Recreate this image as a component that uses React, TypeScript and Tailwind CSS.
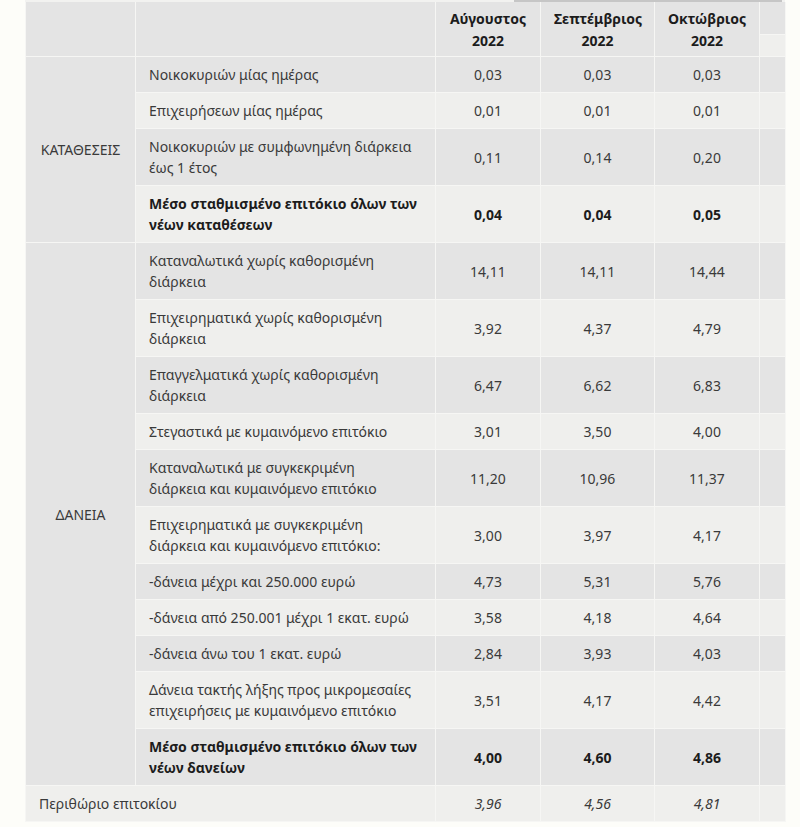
import React from "react";

type Row = {
  label: string;
  values: string[];
  bold?: boolean;
};

const deposits: Row[] = [
  { label: "Νοικοκυριών μίας ημέρας", values: ["0,03", "0,03", "0,03"] },
  { label: "Επιχειρήσεων μίας ημέρας", values: ["0,01", "0,01", "0,01"] },
  {
    label: "Νοικοκυριών με συμφωνημένη διάρκεια\nέως 1 έτος",
    values: ["0,11", "0,14", "0,20"],
  },
  {
    label: "Μέσο σταθμισμένο επιτόκιο όλων των\nνέων καταθέσεων",
    values: ["0,04", "0,04", "0,05"],
    bold: true,
  },
];

const loans: Row[] = [
  { label: "Καταναλωτικά χωρίς καθορισμένη\nδιάρκεια", values: ["14,11", "14,11", "14,44"] },
  { label: "Επιχειρηματικά χωρίς καθορισμένη\nδιάρκεια", values: ["3,92", "4,37", "4,79"] },
  { label: "Επαγγελματικά χωρίς καθορισμένη\nδιάρκεια", values: ["6,47", "6,62", "6,83"] },
  { label: "Στεγαστικά με κυμαινόμενο επιτόκιο", values: ["3,01", "3,50", "4,00"] },
  {
    label: "Καταναλωτικά με συγκεκριμένη\nδιάρκεια και κυμαινόμενο επιτόκιο",
    values: ["11,20", "10,96", "11,37"],
  },
  {
    label: "Επιχειρηματικά με συγκεκριμένη\nδιάρκεια και κυμαινόμενο επιτόκιο:",
    values: ["3,00", "3,97", "4,17"],
  },
  { label: "-δάνεια μέχρι και 250.000 ευρώ", values: ["4,73", "5,31", "5,76"] },
  { label: "-δάνεια από 250.001 μέχρι 1 εκατ. ευρώ", values: ["3,58", "4,18", "4,64"] },
  { label: "-δάνεια άνω του 1 εκατ. ευρώ", values: ["2,84", "3,93", "4,03"] },
  {
    label: "Δάνεια τακτής λήξης προς μικρομεσαίες\nεπιχειρήσεις με κυμαινόμενο επιτόκιο",
    values: ["3,51", "4,17", "4,42"],
  },
  {
    label: "Μέσο σταθμισμένο επιτόκιο όλων των\nνέων δανείων",
    values: ["4,00", "4,60", "4,86"],
    bold: true,
  },
];

const cell = "border border-[#f6f6f4] px-[13px] py-[7px] align-middle";

function BodyRows({ group, rows }: { group: string; rows: Row[] }) {
  return (
    <>
      {rows.map((row, i) => {
        const bg = i % 2 === 0 ? "bg-[#e4e4e4]" : "bg-[#efefed]";
        const weight = row.bold ? "font-bold text-[#1c1c1c]" : "text-[#3a3a3a]";
        return (
          <tr key={row.label} className={bg}>
            {i === 0 && (
              <td rowSpan={rows.length} className={`${cell} bg-[#e4e4e4] text-center text-[#3a3a3a]`}>
                {group}
              </td>
            )}
            <td className={`${cell} ${weight} whitespace-pre-line`}>{row.label}</td>
            {row.values.map((v, j) => (
              <td key={j} className={`${cell} text-center ${weight}`}>
                {v}
              </td>
            ))}
            <td className={cell}></td>
          </tr>
        );
      })}
    </>
  );
}

export default function App() {
  return (
    <div className="min-h-[827px] w-[800px] bg-[#fdfdf9] pl-[25px] pr-[15px] font-['Noto_Sans',sans-serif] text-[14px] leading-[21px]">
      <div className="flex h-[2px] w-[760px] bg-[#f2f2f0]">
        <div className="ml-[489px] h-[2px] w-[268px] bg-[#c6c6c6]"></div>
      </div>
      <table className="w-[760px] table-fixed border-collapse">
        <colgroup>
          <col className="w-[110px]" />
          <col className="w-[300px]" />
          <col className="w-[105px]" />
          <col className="w-[114px]" />
          <col className="w-[105px]" />
          <col className="w-[26px]" />
        </colgroup>
        <thead>
          <tr className="bg-[#e4e4e4]">
            <th rowSpan={2} className={`${cell} border-t-0`}></th>
            <th rowSpan={2} className={`${cell} border-t-0`}></th>
            {["Αύγουστος", "Σεπτέμβριος", "Οκτώβριος"].map((m) => (
              <th
                key={m}
                rowSpan={2}
                className={`${cell} border-t-0 pt-[6px] pb-[4px] text-center font-bold leading-[22px] text-[#1c1c1c]`}
              >
                {m}
                <br />
                2022
              </th>
            ))}
            <th className={`${cell} h-[32px] border-t-0 py-0`}></th>
          </tr>
          <tr>
            <th className={`${cell} h-[22px] bg-[#efefed] py-0`}></th>
          </tr>
        </thead>
        <tbody>
          <BodyRows group="ΚΑΤΑΘΕΣΕΙΣ" rows={deposits} />
          <BodyRows group="ΔΑΝΕΙΑ" rows={loans} />
          <tr className="bg-[#efefed] text-[#3a3a3a]">
            <td colSpan={2} className={cell}>
              Περιθώριο επιτοκίου
            </td>
            {["3,96", "4,56", "4,81"].map((v) => (
              <td key={v} className={`${cell} text-center italic`}>
                {v}
              </td>
            ))}
            <td className={cell}></td>
          </tr>
        </tbody>
      </table>
    </div>
  );
}
